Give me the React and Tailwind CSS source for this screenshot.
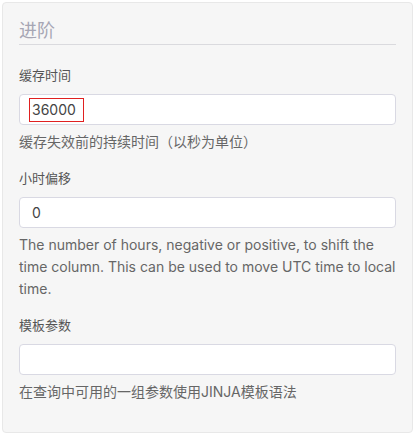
import React from 'react';

const fields = [
  {
    label: '缓存时间',
    value: '36000',
    marked: true,
    help: '缓存失效前的持续时间（以秒为单位）',
  },
  {
    label: '小时偏移',
    value: '0',
    help: 'The number of hours, negative or positive, to shift the time column. This can be used to move UTC time to local time.',
  },
  {
    label: '模板参数',
    value: '',
    help: '在查询中可用的一组参数使用JINJA模板语法',
  },
];

export default function App() {
  return (
    <div className="min-h-[435px] w-[415px] bg-white pt-[2px] px-[2px] font-['Inter','Noto_Sans_CJK_SC',sans-serif]">
      <div className="rounded border border-[#e8e8e8] bg-[#f6f6f6] px-4 pt-[15px] pb-[29px]">
        <h4 className="border-b border-[#dadade] text-[18px] leading-[26px] font-normal text-[#a6a6b4]">进阶</h4>
        <div className="mt-[20px] space-y-[15px]">
          {fields.map(f => (
            <div key={f.label}>
              <label className="block text-[13px] leading-[20px] text-[#555]">{f.label}</label>
              <div className="mt-[9px] flex h-[31px] items-center rounded border border-[#d9d9e3] bg-white px-[12px] text-[14px] text-[#444]">
                {f.marked ? (
                  <span className="-ml-[3px] border border-[#e02020] pl-[2px] pr-[7px] leading-[22px]">{f.value}</span>
                ) : (
                  <span>{f.value}</span>
                )}
              </div>
              <p className="mt-[6px] text-[14px] leading-[22px] text-[#666]">{f.help}</p>
            </div>
          ))}
        </div>
      </div>
    </div>
  );
}
